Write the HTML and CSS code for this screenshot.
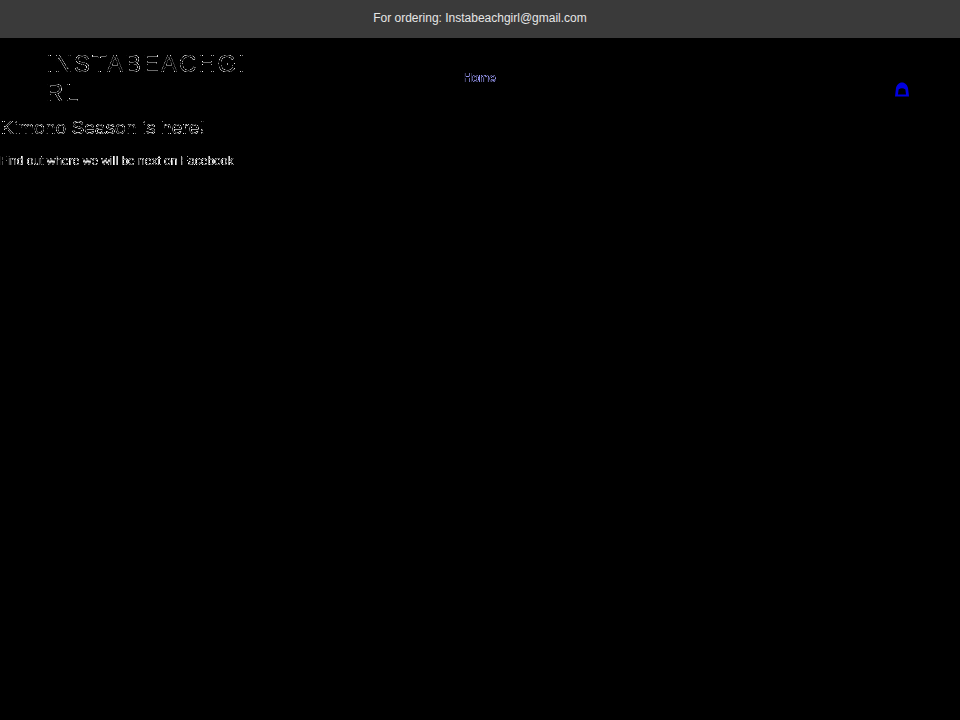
FILE: index.html
```html
<!doctype html>
<html>
<head>
    <title>Instabeachgirl</title>
    <meta charset="utf-8" />
    <link rel="stylesheet" href="styles.css">
</head>
<body>
	<svg class="defs" width="0" height="0">
		<filter id="edge" color-interpolation-filters="sRGB" x="0" y="0" width="100%" height="100%">
			<feComponentTransfer>
				<feFuncA type="table" tableValues="0 1 0" />
			</feComponentTransfer>
		</filter>
		<!-- big text: keeps the curves, drops the straight upright stems -->
		<filter id="edgeBig" color-interpolation-filters="sRGB" x="0" y="0" width="100%" height="100%">
			<feComponentTransfer in="SourceGraphic" result="band">
				<feFuncA type="table" tableValues="0 1 0" />
			</feComponentTransfer>
			<feConvolveMatrix in="SourceGraphic" order="1,3" kernelMatrix="-1 2 -1" divisor="1" preserveAlpha="false" result="up" />
			<feConvolveMatrix in="SourceGraphic" order="1,3" kernelMatrix="1 -2 1" divisor="1" preserveAlpha="false" result="down" />
			<feMerge result="both">
				<feMergeNode in="up" />
				<feMergeNode in="down" />
			</feMerge>
			<feComponentTransfer in="both" result="boost">
				<feFuncA type="linear" slope="5" />
				<feFuncR type="linear" slope="5" />
				<feFuncG type="linear" slope="5" />
				<feFuncB type="linear" slope="5" />
			</feComponentTransfer>
			<feComposite in="band" in2="boost" operator="in" />
		</filter>
	</svg>
	<div class="topBar">For ordering: Instabeachgirl@gmail.com</div>
	<div class="header">
		<div class="logo edgeBig">INSTABEACHGIRL</div>
		<a class="navLink edge" href="#">Home</a>
		<a class="cart" href="#">
			<svg width="16" height="16" viewBox="0 0 16 16">
				<path fill="#0000e0" fill-rule="evenodd" d="M1 14.5 L2 6 C2.6 3 5 .5 8 .5 C11 .5 13.4 3 14 6 L15 14.5 Z M4 12.5 H12 L11.4 7.5 Q8 5 4.6 7.5 Z" />
			</svg>
		</a>
	</div>
	<div class="content">
		<h2 class="edgeBig">Kimono Season is here!</h2>
		<p class="edge">Find out where we will be next on Facebook</p>
	</div>
</body>
</html>
```

FILE: styles.css
```css
body {
	margin: 0;
	background-color: #000;
	font-family: "Liberation Sans", Arial, sans-serif;
	color: #fff;
}
.defs {
	display: block;
	height: 0;
}
.edge {
	filter: url(#edge);
}
.edgeBig {
	filter: url(#edgeBig);
}
.topBar {
	height: 38px;
	line-height: 37px;
	background-color: #3a3a3a;
	color: #e6e6e6;
	font-size: 12px;
	text-align: center;
}
.header {
	display: grid;
	grid-template-columns: 1fr auto 1fr;
	align-items: center;
	padding: 11px 48px 10px 46px;
}
.logo {
	width: 205px;
	font-size: 24px;
	line-height: 29px;
	letter-spacing: 2px;
	word-break: break-all;
}
.navLink {
	margin-left: 1px;
	color: #a0a0ff;
	font-size: 12px;
	font-weight: bold;
	letter-spacing: -0.2px;
	text-decoration: none;
}
.cart {
	display: flex;
	justify-self: end;
	margin: 24px 2px 0 0;
}
.content h2 {
	margin: 0;
	padding-left: 1px;
	font-size: 19.2px;
	font-weight: normal;
	line-height: 22px;
}
.content p {
	margin: 13px 0 0 0;
	font-size: 12px;
	line-height: 18px;
}
```
